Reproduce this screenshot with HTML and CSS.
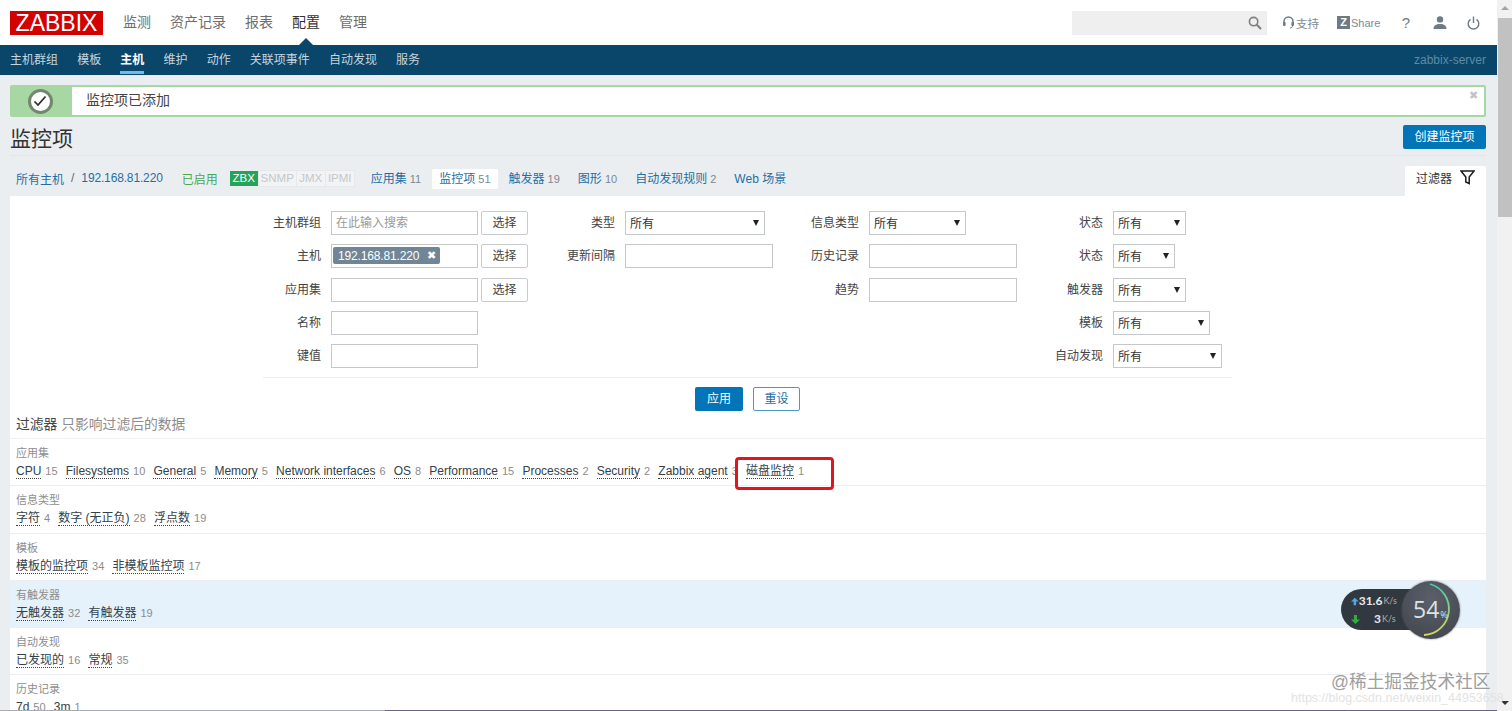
FILE: index.html
```html
<!DOCTYPE html>
<html lang="zh">
<head>
  <meta charset="utf-8">
  <title>监控项</title>
  <link rel="stylesheet" href="styles.css">
</head>
<body>
  <div class="page">
    <header class="top-bar">
      <div class="logo">ZABBIX</div>
      <nav class="main-nav">
        <a>监测</a>
        <a>资产记录</a>
        <a>报表</a>
        <a class="active">配置</a>
        <a>管理</a>
      </nav>
      <div class="search-box">
        <svg width="14" height="14" viewBox="0 0 14 14"><circle cx="5.6" cy="5.6" r="4.2" fill="none" stroke="#7f7f7f" stroke-width="1.6"/><path d="M8.8 8.8L13 13" stroke="#7f7f7f" stroke-width="2"/></svg>
      </div>
      <div class="top-links">
        <a class="support">
          <svg width="11" height="13" viewBox="0 0 11 13"><path d="M1 8V5.500a4.500 4.500 0 0 1 9 0V8" fill="none" stroke="#6e7b85" stroke-width="1.500"/><rect x="0" y="6" width="2.600" height="4" rx="1" fill="#6e7b85"/><rect x="8.400" y="6" width="2.600" height="4" rx="1" fill="#6e7b85"/><path d="M9.500 10c0 1.200-1 2-2.500 2" fill="none" stroke="#6e7b85" stroke-width="1"/></svg>
          支持
        </a>
        <a class="share"><span class="share-z">Z</span>Share</a>
        <a class="help">?</a>
        <a class="user">
          <svg width="14" height="13" viewBox="0 0 14 13"><circle cx="7" cy="3.400" r="3.200" fill="#6e7b85"/><path d="M0.500 13c0-3.500 2.500-5 6.500-5s6.500 1.500 6.500 5z" fill="#6e7b85"/></svg>
        </a>
        <a class="power">
          <svg width="13" height="14" viewBox="0 0 13 14"><path d="M3.500 3.300a5.300 5.300 0 1 0 6 0" fill="none" stroke="#6e7b85" stroke-width="1.400"/><path d="M6.500 0.500V7" stroke="#6e7b85" stroke-width="1.400"/></svg>
        </a>
      </div>
    </header>

    <nav class="sub-nav">
      <a>主机群组</a>
      <a>模板</a>
      <a class="active">主机</a>
      <a>维护</a>
      <a>动作</a>
      <a>关联项事件</a>
      <a>自动发现</a>
      <a>服务</a>
      <span class="server-name">zabbix-server</span>
    </nav>

    <main class="content">
      <div class="msg-good">
        <div class="msg-icon">
          <span class="check-ring">
            <svg width="14" height="12" viewBox="0 0 14 12"><path d="M1.500 6.500L5 10L12.500 1.500" fill="none" stroke="#2b2b2b" stroke-width="1.700"/></svg>
          </span>
        </div>
        <div class="msg-text">监控项已添加</div>
        <span class="msg-close">✖</span>
      </div>

      <div class="title-row">
        <h1>监控项</h1>
        <a class="btn-create">创建监控项</a>
      </div>

      <div class="host-row">
        <a class="link first">所有主机</a>
        <span class="slash">/</span>
        <a class="link ip">192.168.81.220</a>
        <span class="enabled">已启用</span>
        <div class="badges">
          <span class="badge on">ZBX</span>
          <span class="badge">SNMP</span>
          <span class="badge">JMX</span>
          <span class="badge">IPMI</span>
        </div>
        <div class="host-tabs">
          <a class="host-tab"><b>应用集</b> 11</a>
          <a class="host-tab selected"><b>监控项</b> 51</a>
          <a class="host-tab"><b>触发器</b> 19</a>
          <a class="host-tab"><b>图形</b> 10</a>
          <a class="host-tab"><b>自动发现规则</b> 2</a>
          <a class="host-tab"><b>Web 场景</b></a>
        </div>
        <div class="filter-tab">
          过滤器
          <svg width="15" height="15" viewBox="0 0 15 15"><path d="M1 1h13L9.200 7v6.500L5.800 12V7z" fill="none" stroke="#1c1c1c" stroke-width="1.500"/></svg>
        </div>
      </div>

      <section class="filter-panel">
        <div class="filter-form">
          <label>主机群组</label>
          <div class="control"><div class="input short placeholder">在此输入搜索</div><a class="btn-select">选择</a></div>
          <label>类型</label>
          <div class="control"><div class="select w140">所有</div></div>
          <label>信息类型</label>
          <div class="control"><div class="select w97">所有</div></div>
          <label>状态</label>
          <div class="control"><div class="select w73">所有</div></div>

          <label>主机</label>
          <div class="control"><div class="input short with-chip"><span class="host-chip">192.168.81.220<i>✖</i></span></div><a class="btn-select">选择</a></div>
          <label>更新间隔</label>
          <div class="control"><div class="input"></div></div>
          <label>历史记录</label>
          <div class="control"><div class="input"></div></div>
          <label>状态</label>
          <div class="control"><div class="select w62">所有</div></div>

          <label>应用集</label>
          <div class="control"><div class="input short"></div><a class="btn-select">选择</a></div>
          <label></label>
          <div class="control"></div>
          <label>趋势</label>
          <div class="control"><div class="input"></div></div>
          <label>触发器</label>
          <div class="control"><div class="select w73">所有</div></div>

          <label>名称</label>
          <div class="control"><div class="input short"></div></div>
          <label></label>
          <div class="control"></div>
          <label></label>
          <div class="control"></div>
          <label>模板</label>
          <div class="control"><div class="select w97">所有</div></div>

          <label>键值</label>
          <div class="control"><div class="input short"></div></div>
          <label></label>
          <div class="control"></div>
          <label></label>
          <div class="control"></div>
          <label>自动发现</label>
          <div class="control"><div class="select w109">所有</div></div>
        </div>

        <div class="form-buttons">
          <a class="btn-apply">应用</a>
          <a class="btn-reset">重设</a>
        </div>

        <div class="subfilter-head">过滤器 <span>只影响过滤后的数据</span></div>

        <div class="subfilter">
          <div class="sub-label">应用集</div>
          <div class="sub-links">
            <a>CPU</a><em>15</em>
            <a>Filesystems</a><em>10</em>
            <a>General</a><em>5</em>
            <a>Memory</a><em>5</em>
            <a>Network interfaces</a><em>6</em>
            <a>OS</a><em>8</em>
            <a>Performance</a><em>15</em>
            <a>Processes</a><em>2</em>
            <a>Security</a><em>2</em>
            <a>Zabbix agent</a><em>3</em>
            <a>磁盘监控</a><em>1</em>
          </div>
        </div>
        <div class="subfilter">
          <div class="sub-label">信息类型</div>
          <div class="sub-links">
            <a>字符</a><em>4</em>
            <a>数字 (无正负)</a><em>28</em>
            <a>浮点数</a><em>19</em>
          </div>
        </div>
        <div class="subfilter">
          <div class="sub-label">模板</div>
          <div class="sub-links">
            <a>模板的监控项</a><em>34</em>
            <a>非模板监控项</a><em>17</em>
          </div>
        </div>
        <div class="subfilter hilite">
          <div class="sub-label">有触发器</div>
          <div class="sub-links">
            <a>无触发器</a><em>32</em>
            <a>有触发器</a><em>19</em>
          </div>
        </div>
        <div class="subfilter">
          <div class="sub-label">自动发现</div>
          <div class="sub-links">
            <a>已发现的</a><em>16</em>
            <a>常规</a><em>35</em>
          </div>
        </div>
        <div class="subfilter">
          <div class="sub-label">历史记录</div>
          <div class="sub-links">
            <a>7d</a><em>50</em>
            <a>3m</a><em>1</em>
          </div>
        </div>
      </section>
    </main>
  </div>

  <div class="scrollbar">
    <span class="arrow up"></span>
    <div class="thumb"></div>
    <span class="arrow down"></span>
  </div>

  <!-- things lying over the page -->
  <div class="red-box"></div>

  <div class="net-widget">
    <div class="net-pill">
      <div class="net-row">
        <svg width="9" height="9" viewBox="0 0 9 9"><path d="M4.500 0L9 4.500H6V9H3V4.500H0z" fill="#4fa8e0"/></svg>
        <b>31.6</b><small>K/s</small>
      </div>
      <div class="net-row">
        <svg width="9" height="9" viewBox="0 0 9 9"><path d="M4.500 9L9 4.500H6V0H3V4.500H0z" fill="#2fae3f"/></svg>
        <b>3</b><small>K/s</small>
      </div>
    </div>
    <div class="net-circle">
      <svg width="58" height="58" viewBox="0 0 58 58">
        <defs>
          <linearGradient id="arc" x1="0" y1="0" x2="0" y2="1">
            <stop offset="0" stop-color="#4cc9b0"/>
            <stop offset="1" stop-color="#d6d65a"/>
          </linearGradient>
        </defs>
        <path d="M28 3A26 26 0 0 1 22 54" fill="none" stroke="url(#arc)" stroke-width="1.800"/>
      </svg>
      <span class="net-value">54<small>%</small></span>
    </div>
  </div>

  <div class="watermark">@稀土掘金技术社区</div>
  <div class="watermark-url">https://blog.csdn.net/weixin_44953658</div>
  <div class="bottom-line"></div>
</body>
</html>
```

FILE: styles.css
```css
* {
    box-sizing: border-box;
}

html, body {
    height: 711px;
    margin: 0;
    overflow: hidden;
}

body {
    display: flex;
    background: #ebeef0;
    color: #1f2c33;
    font-family: "Liberation Sans", "Noto Sans CJK SC", sans-serif;
    font-size: 12px;
}

.page {
    flex: 1;
    min-width: 0;
    height: 711px;
    overflow: hidden;
}

/* top bar */
.top-bar {
    display: flex;
    align-items: center;
    height: 45px;
    padding-left: 10px;
    background: #fff;
}

.logo {
    width: 93px;
    height: 24px;
    background: #d40000;
    color: #fff;
    font-size: 23px;
    line-height: 24px;
    text-align: center;
}

.main-nav {
    display: flex;
    gap: 19px;
    margin-left: 20px;
    font-size: 14px;
    color: #6d6d6d;
}

.main-nav a {
    position: relative;
    line-height: 45px;
}

.main-nav .active {
    color: #333;
}

.main-nav .active::after {
    content: "";
    position: absolute;
    left: 7px;
    bottom: 0;
    border-left: 7px solid transparent;
    border-right: 7px solid transparent;
    border-bottom: 7px solid #0a466a;
}

.search-box {
    display: flex;
    align-items: center;
    justify-content: flex-end;
    width: 195px;
    height: 24px;
    margin-left: auto;
    padding-right: 5px;
    background: #efefef;
}

.top-links {
    display: flex;
    align-items: center;
    height: 24px;
    margin-left: 16px;
    margin-right: 17px;
    color: #7d8a93;
    font-size: 11px;
}

.top-links a {
    display: flex;
    align-items: center;
}

.support {
    gap: 2px;
    width: 54px;
    font-size: 11.500px;
}

.share {
    width: 58px;
}

.share-z {
    width: 13px;
    height: 13px;
    margin-right: 1px;
    background: #6e7b85;
    color: #fff;
    font-size: 11px;
    font-weight: bold;
    line-height: 13px;
    text-align: center;
}

.help {
    justify-content: center;
    width: 22px;
    font-size: 15px;
    color: #6e7b85;
}

.user {
    justify-content: center;
    width: 14px;
    margin-left: 16px;
}

.power {
    justify-content: center;
    width: 13px;
    margin-left: 20px;
}

/* second bar */
.sub-nav {
    display: flex;
    align-items: center;
    gap: 19.15px;
    height: 30px;
    padding: 0 11px 0 10px;
    background: #0a466a;
    color: #c6d5de;
}

.sub-nav a {
    position: relative;
    line-height: 30px;
}

.sub-nav .active {
    color: #fff;
    font-weight: bold;
}

.sub-nav .active::after {
    content: "";
    position: absolute;
    left: 0;
    right: 0;
    bottom: 1px;
    height: 3px;
    background: #70bbea;
}

.server-name {
    margin-left: auto;
    color: #5e8aa5;
}

/* page body */
.content {
    padding: 10px 11px 0 10px;
}

.msg-good {
    position: relative;
    display: flex;
    height: 32px;
    border: 2px solid #a7d7a2;
    border-radius: 2px;
    background: #fff;
}

.msg-icon {
    display: flex;
    align-items: center;
    justify-content: center;
    width: 60px;
    padding-right: 4px;
    background: #a7d7a2;
}

.check-ring {
    display: flex;
    align-items: center;
    justify-content: center;
    width: 25px;
    height: 25px;
    border: 3px solid #73876f;
    border-radius: 50%;
    background: #fff;
}

.msg-text {
    padding-left: 14px;
    font-size: 14px;
    line-height: 27px;
    color: #444;
}

.msg-close {
    position: absolute;
    top: 2px;
    right: 6px;
    color: #c3c3c3;
    font-size: 11px;
}

.title-row {
    display: flex;
    align-items: center;
    justify-content: space-between;
    height: 31px;
    margin-top: 8px;
    padding-bottom: 6px;
    border-bottom: 1px solid #e3e6e8;
    background: linear-gradient(#ebeef0, #ebeef0) no-repeat 0 100% / 70px 1px;
}

.title-row h1 {
    margin: 4px 0 0;
    color: #333;
    font-size: 21px;
    font-weight: normal;
    line-height: 26px;
}

.btn-create {
    width: 83px;
    height: 24px;
    border-radius: 2px;
    background: #0275b8;
    color: #fff;
    line-height: 24px;
    text-align: center;
}

.host-row {
    display: flex;
    align-items: center;
    height: 40px;
    padding-top: 4px;
}

.link {
    color: #1f6ea5;
}

.link.first {
    margin-left: 6px;
}

.link.ip {
    letter-spacing: -0.15px;
}

.slash {
    margin: 0 7px;
    color: #666;
}

.enabled {
    margin-left: 19px;
    color: #4aa84f;
}

.badges {
    display: grid;
    grid-template-columns: 28px 37px 28px 28px;
    gap: 1px;
    margin-left: 12px;
    font-size: 11.500px;
}

.badge {
    height: 15px;
    background: #f2f3f4;
    box-shadow: 0 0 0 1px #e6e8ea;
    color: #c4c8cb;
    line-height: 15px;
    text-align: center;
}

.badge.on {
    background: #25a35a;
    box-shadow: none;
    color: #fff;
}

.host-tabs {
    display: flex;
    align-items: center;
    margin-left: 10px;
    padding-top: 1px;
    color: #7c8890;
    font-size: 11px;
}

.host-tab {
    height: 20px;
    padding: 0 7px;
    margin-right: 4px;
    line-height: 20px;
    white-space: nowrap;
}

.host-tab:last-child {
    margin-right: 0;
}

.host-tab b {
    color: #1f6ea5;
    font-size: 12px;
    font-weight: normal;
}

.host-tab.selected {
    border-radius: 2px;
    background: #fff;
}

.filter-tab {
    display: flex;
    align-items: center;
    gap: 8px;
    align-self: flex-end;
    width: 81px;
    height: 30px;
    margin-left: auto;
    padding: 0 0 8px 11px;
    border-radius: 2px 2px 0 0;
    background: #fff;
    color: #333;
}

/* filter */
.filter-panel {
    background: #fff;
    height: 520px;
    overflow: hidden;
}

.filter-form {
    display: grid;
    grid-template-columns: 58px 197px 77px 148px 76px 148px 76px 119px;
    grid-auto-rows: 24px;
    column-gap: 10px;
    row-gap: 9.25px;
    width: 969px;
    margin: 0 0 0 253px;
    padding: 15px 0 9px;
    border-bottom: 1px solid #eceef0;
    box-sizing: content-box;
}

.filter-form label {
    color: #444;
    line-height: 24px;
    text-align: right;
    white-space: nowrap;
}

.control {
    display: flex;
    gap: 3px;
}

.input {
    flex: 0 0 148px;
    width: 148px;
    height: 24px;
    padding: 2px;
    border: 1px solid #c4c8c9;
    background: #fff;
}

.input.short {
    flex-basis: 147px;
    width: 147px;
}

.input.with-chip {
    padding: 2px 1px;
}

.input.placeholder {
    padding-left: 4px;
    color: #9a9a9a;
    line-height: 18px;
}

.host-chip {
    display: flex;
    align-items: center;
    justify-content: space-between;
    width: 107px;
    height: 17px;
    padding: 0 4px 0 5px;
    border-radius: 2px;
    background: #708595;
    color: #fff;
    letter-spacing: -0.15px;
}

.host-chip i {
    font-size: 11px;
    font-style: normal;
}

.btn-select {
    width: 47px;
    height: 24px;
    border: 1px solid #c9cccc;
    border-radius: 2px;
    color: #444;
    line-height: 23px;
    text-align: center;
}

.select {
    position: relative;
    height: 24px;
    padding-left: 4px;
    border: 1px solid #c4c8c9;
    color: #333;
    line-height: 24px;
}

.select::after {
    content: "";
    position: absolute;
    top: 8px;
    right: 5px;
    border-left: 3px solid transparent;
    border-right: 3px solid transparent;
    border-top: 6px solid #222;
}

.w140 { width: 140px; }
.w109 { width: 109px; }
.w97 { width: 97px; }
.w73 { width: 73px; }
.w62 { width: 62px; }

.form-buttons {
    display: flex;
    justify-content: center;
    gap: 10px;
    margin-top: 9px;
    padding-right: 1px;
}

.btn-apply,
.btn-reset {
    height: 24px;
    border-radius: 2px;
    line-height: 25px;
    text-align: center;
}

.btn-apply {
    width: 48px;
    background: #0275b8;
    color: #fff;
}

.btn-reset {
    width: 47px;
    border: 1px solid #4b98c8;
    color: #1f6ea5;
    line-height: 23px;
}

.subfilter-head {
    height: 28px;
    padding: 4px 0 0 6px;
    border-bottom: 1px solid #f0f1f2;
    color: #444;
    font-size: 13.800px;
    line-height: 20px;
}

.subfilter-head span {
    color: #8c8c8c;
}

.subfilter {
    height: 47.250px;
    padding: 6px 0 0 6px;
    border-bottom: 1px solid #eceef0;
}

.subfilter.hilite {
    background: #e5f1fb;
}

.sub-label {
    height: 16px;
    color: #8e8e8e;
    font-size: 11px;
    line-height: 16px;
}

.sub-links {
    margin-top: 1px;
    line-height: 18px;
    white-space: nowrap;
}

.sub-links a {
    border-bottom: 1px dotted #444;
    color: #33414a;
}

.sub-links em {
    margin: 0 4.800px 0 4px;
    color: #8c8c8c;
    font-size: 11px;
    font-style: normal;
}

/* scrollbar */
.scrollbar {
    display: flex;
    flex-direction: column;
    align-items: center;
    flex: 0 0 15px;
    height: 711px;
    background: #f1f1f1;
}

.thumb {
    width: 14px;
    height: 199px;
    margin-top: 8px;
    background: #c1c1c1;
}

.arrow {
    width: 0;
    height: 0;
    border-left: 4px solid transparent;
    border-right: 4px solid transparent;
}

.arrow.up {
    margin-top: 6px;
    border-bottom: 4px solid #a3a3a3;
}

.arrow.down {
    margin-top: auto;
    margin-bottom: 6px;
    border-top: 4px solid #333;
}

/* overlays */
.red-box {
    position: absolute;
    left: 735px;
    top: 457px;
    width: 99px;
    height: 33px;
    border: 3px solid #e0161c;
    border-radius: 4px;
}

.net-widget {
    position: absolute;
    left: 1341px;
    top: 581px;
    width: 120px;
    height: 58px;
}

.net-pill {
    position: absolute;
    left: 0;
    top: 8px;
    width: 75px;
    height: 41px;
    padding: 3px 19px 0 10px;
    border-radius: 21px 0 0 21px;
    background: #32383f;
    color: #e6e9ec;
}

.net-row {
    display: flex;
    align-items: center;
    height: 18px;
    font-family: "Lato", sans-serif;
    font-size: 12px;
    line-height: 18px;
}

.net-row b {
    margin-left: auto;
}

.net-row small {
    width: 15px;
    margin-left: 1px;
    color: #a8adb3;
    font-size: 9px;
}

.net-circle {
    position: absolute;
    left: 61px;
    top: 0;
    width: 58px;
    height: 58px;
    border-radius: 50%;
    background: radial-gradient(circle at 50% 30%, #5a5f69, #40444c);
    box-shadow: 0 0 2px #666;
}

.net-value {
    position: absolute;
    left: 11px;
    top: 13px;
    color: #dfe2e6;
    font-family: "Open Sans", sans-serif;
    font-size: 23px;
    line-height: 30px;
}

.net-value small {
    margin-left: 1px;
    font-size: 9px;
}

.watermark {
    position: absolute;
    left: 1331px;
    top: 670px;
    color: #8e8e8e;
    font-size: 17.700px;
    line-height: 24px;
    opacity: 0.85;
    white-space: nowrap;
}

.watermark-url {
    position: absolute;
    left: 1291px;
    top: 690px;
    color: #e3e3e3;
    font-size: 12.500px;
    line-height: 16px;
    white-space: nowrap;
}

.bottom-line {
    position: absolute;
    left: 0;
    top: 710px;
    width: 1497px;
    height: 1px;
    background: linear-gradient(90deg, #a9adb3 385px, #6b6384 385px);
}
```
